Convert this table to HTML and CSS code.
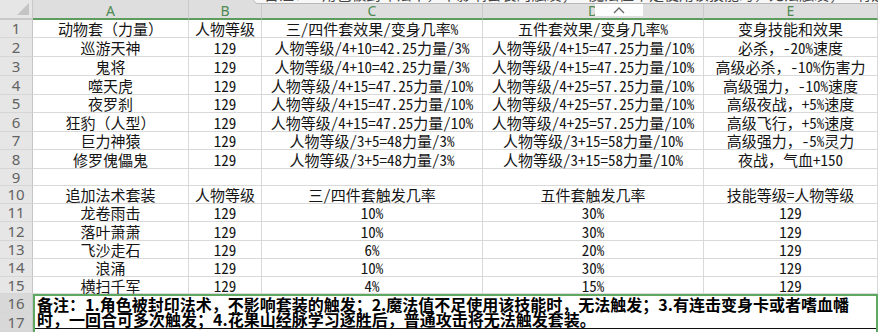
FILE: index.html
```html
<!DOCTYPE html>
<html lang="zh-CN">
<head>
<meta charset="utf-8">
<title>套装效果</title>
<link rel="stylesheet" href="styles.css">
</head>
<body>
<div class="sheet">
  <div class="corner"><span class="tri"></span></div>
  <div class="ch">A</div><div class="ch">B</div><div class="ch">C</div><div class="ch">D</div><div class="ch">E</div>

  <div class="rh">1</div><div class="c">动物套（力量）</div><div class="c">人物等级</div><div class="c">三/四件套效果/变身几率%</div><div class="c">五件套效果/变身几率%</div><div class="c">变身技能和效果</div>
  <div class="rh">2</div><div class="c">巡游天神</div><div class="c">129</div><div class="c">人物等级/4+10=42.25力量/3%</div><div class="c">人物等级/4+15=47.25力量/10%</div><div class="c">必杀，-20%速度</div>
  <div class="rh">3</div><div class="c">鬼将</div><div class="c">129</div><div class="c">人物等级/4+10=42.25力量/3%</div><div class="c">人物等级/4+15=47.25力量/10%</div><div class="c">高级必杀，-10%伤害力</div>
  <div class="rh">4</div><div class="c">噬天虎</div><div class="c">129</div><div class="c">人物等级/4+15=47.25力量/10%</div><div class="c">人物等级/4+25=57.25力量/10%</div><div class="c">高级强力，-10%速度</div>
  <div class="rh">5</div><div class="c">夜罗刹</div><div class="c">129</div><div class="c">人物等级/4+15=47.25力量/10%</div><div class="c">人物等级/4+25=57.25力量/10%</div><div class="c">高级夜战，+5%速度</div>
  <div class="rh">6</div><div class="c">狂豹（人型）</div><div class="c">129</div><div class="c">人物等级/4+15=47.25力量/10%</div><div class="c">人物等级/4+25=57.25力量/10%</div><div class="c">高级飞行，+5%速度</div>
  <div class="rh">7</div><div class="c">巨力神猿</div><div class="c">129</div><div class="c">人物等级/3+5=48力量/3%</div><div class="c">人物等级/3+15=58力量/10%</div><div class="c">高级强力，-5%灵力</div>
  <div class="rh">8</div><div class="c">修罗傀儡鬼</div><div class="c">129</div><div class="c">人物等级/3+5=48力量/3%</div><div class="c">人物等级/3+15=58力量/10%</div><div class="c">夜战，气血+150</div>
  <div class="rh">9</div><div class="c"></div><div class="c"></div><div class="c"></div><div class="c"></div><div class="c"></div>
  <div class="rh">10</div><div class="c">追加法术套装</div><div class="c">人物等级</div><div class="c">三/四件套触发几率</div><div class="c">五件套触发几率</div><div class="c">技能等级=人物等级</div>
  <div class="rh">11</div><div class="c">龙卷雨击</div><div class="c">129</div><div class="c">10%</div><div class="c">30%</div><div class="c">129</div>
  <div class="rh">12</div><div class="c">落叶萧萧</div><div class="c">129</div><div class="c">10%</div><div class="c">30%</div><div class="c">129</div>
  <div class="rh">13</div><div class="c">飞沙走石</div><div class="c">129</div><div class="c">6%</div><div class="c">20%</div><div class="c">129</div>
  <div class="rh">14</div><div class="c">浪涌</div><div class="c">129</div><div class="c">10%</div><div class="c">30%</div><div class="c">129</div>
  <div class="rh">15</div><div class="c">横扫千军</div><div class="c">129</div><div class="c">4%</div><div class="c">15%</div><div class="c">129</div>
  <div class="rh rh-sel r16">16</div>
  <div class="rh rh-sel r17">17</div>
  <div class="remark"><div class="remark-text"><div class="rl">备注：1.角色被封印法术，不影响套装的触发；2.魔法值不足使用该技能时，无法触发；3.有连击变身卡或者嗜血幡</div><div class="rl">时，一回合可多次触发；4.花果山经脉学习逐胜后，普通攻击将无法触发套装。</div></div></div>
</div>

<div class="tip"><span class="tip-text">备注：1.角色被封印法术，不影响套装的触发；2.魔法值不足使用该技能时，无法触发；3.有连击变身卡或者嗜血幡时</span></div>
<div class="expander"><svg width="14" height="8" viewBox="0 0 14 8"><polyline points="2,7 7,2 12,7" fill="none" stroke="#666" stroke-width="1.3"/></svg></div>
</body>
</html>
```

FILE: styles.css
```css
html, body {
  margin: 0;
  padding: 0;
  background: #ffffff;
  overflow: hidden;
}
body {
  width: 878px;
  height: 332px;
  position: relative;
}
.sheet {
  display: grid;
  grid-template-columns: 33px 156px 73px 221px 221px 174px;
  grid-template-rows: 20px 18px 19px 19px 19px 18px 19px 18px 19px 17px 18px 18px 19px 18px 18px 17px 19px 19px;
  font-family: "Noto Sans Mono CJK SC", "Noto Sans CJK SC", sans-serif;
  color: #151515;
}
.corner {
  background: #e6e6e6;
  border-right: 1px solid #c8c8c8;
  border-bottom: 2px solid #c8c8c8;
  position: relative;
}
.tri {
  position: absolute;
  right: 3px;
  bottom: 3px;
  width: 0;
  height: 0;
  border-left: 12px solid transparent;
  border-bottom: 12px solid #c4c4c4;
}
.ch {
  background: #dedede;
  border-right: 1px solid #c9c9c9;
  border-bottom: 2px solid #5c9c5e;
  color: #4d8a54;
  font-family: "Noto Sans", "Liberation Sans", sans-serif;
  font-size: 14px;
  display: flex;
  align-items: center;
  justify-content: center;
  padding-top: 3px;
  line-height: 1;
}
.rh {
  background: #e6e6e6;
  border-right: 1px solid #c6c6c6;
  border-bottom: 1px solid #d6d6d6;
  color: #636363;
  font-family: "Noto Sans", "Liberation Sans", sans-serif;
  font-size: 15px;
  display: flex;
  align-items: center;
  justify-content: center;
  line-height: 1;
}
.rh-sel {
  background: #d8d8d8;
}
.r16 { grid-column: 1; grid-row: 17; }
.r17 { grid-column: 1; grid-row: 18; }
.c {
  border-right: 1px solid #d9d9d9;
  border-bottom: 1px solid #d9d9d9;
  display: flex;
  align-items: center;
  justify-content: center;
  white-space: nowrap;
  font-size: 15px;
  line-height: 1;
  overflow: visible;
}
.remark {
  grid-column: 2 / 7;
  grid-row: 17 / 19;
  border: 2px solid #5fa862;
  border-bottom: none;
  padding: 0 2px;
  background: #fff;
}
.remark-text {
  font-family: "Noto Sans CJK SC", sans-serif;
  font-weight: bold;
  font-size: 16px;
  color: #000;
  white-space: nowrap;
  height: 33px;
  box-sizing: border-box;
  border-bottom: 1px solid #111;
  margin: 0 -2px;
  padding: 0 2px;
  display: flex;
  flex-direction: column;
}
.rl {
  height: 16px;
  line-height: 16px;
}
.rl + .rl {
  margin-top: -1px;
}
.tip {
  position: absolute;
  left: 253px;
  top: -13px;
  width: 640px;
  height: 17px;
  box-sizing: border-box;
  background: #f7f7f7;
  border: 1px solid #b8b8b8;
  border-radius: 5px;
  padding-left: 10px;
  overflow: hidden;
}
.tip-text {
  display: block;
  font-family: "Noto Sans CJK SC", sans-serif;
  font-size: 15px;
  line-height: 11px;
  color: #444;
  white-space: nowrap;
}
.expander {
  position: absolute;
  left: 595px;
  top: 4px;
  width: 48px;
  height: 12px;
  background: #fdfdfd;
  display: flex;
  align-items: center;
  justify-content: center;
}
```
